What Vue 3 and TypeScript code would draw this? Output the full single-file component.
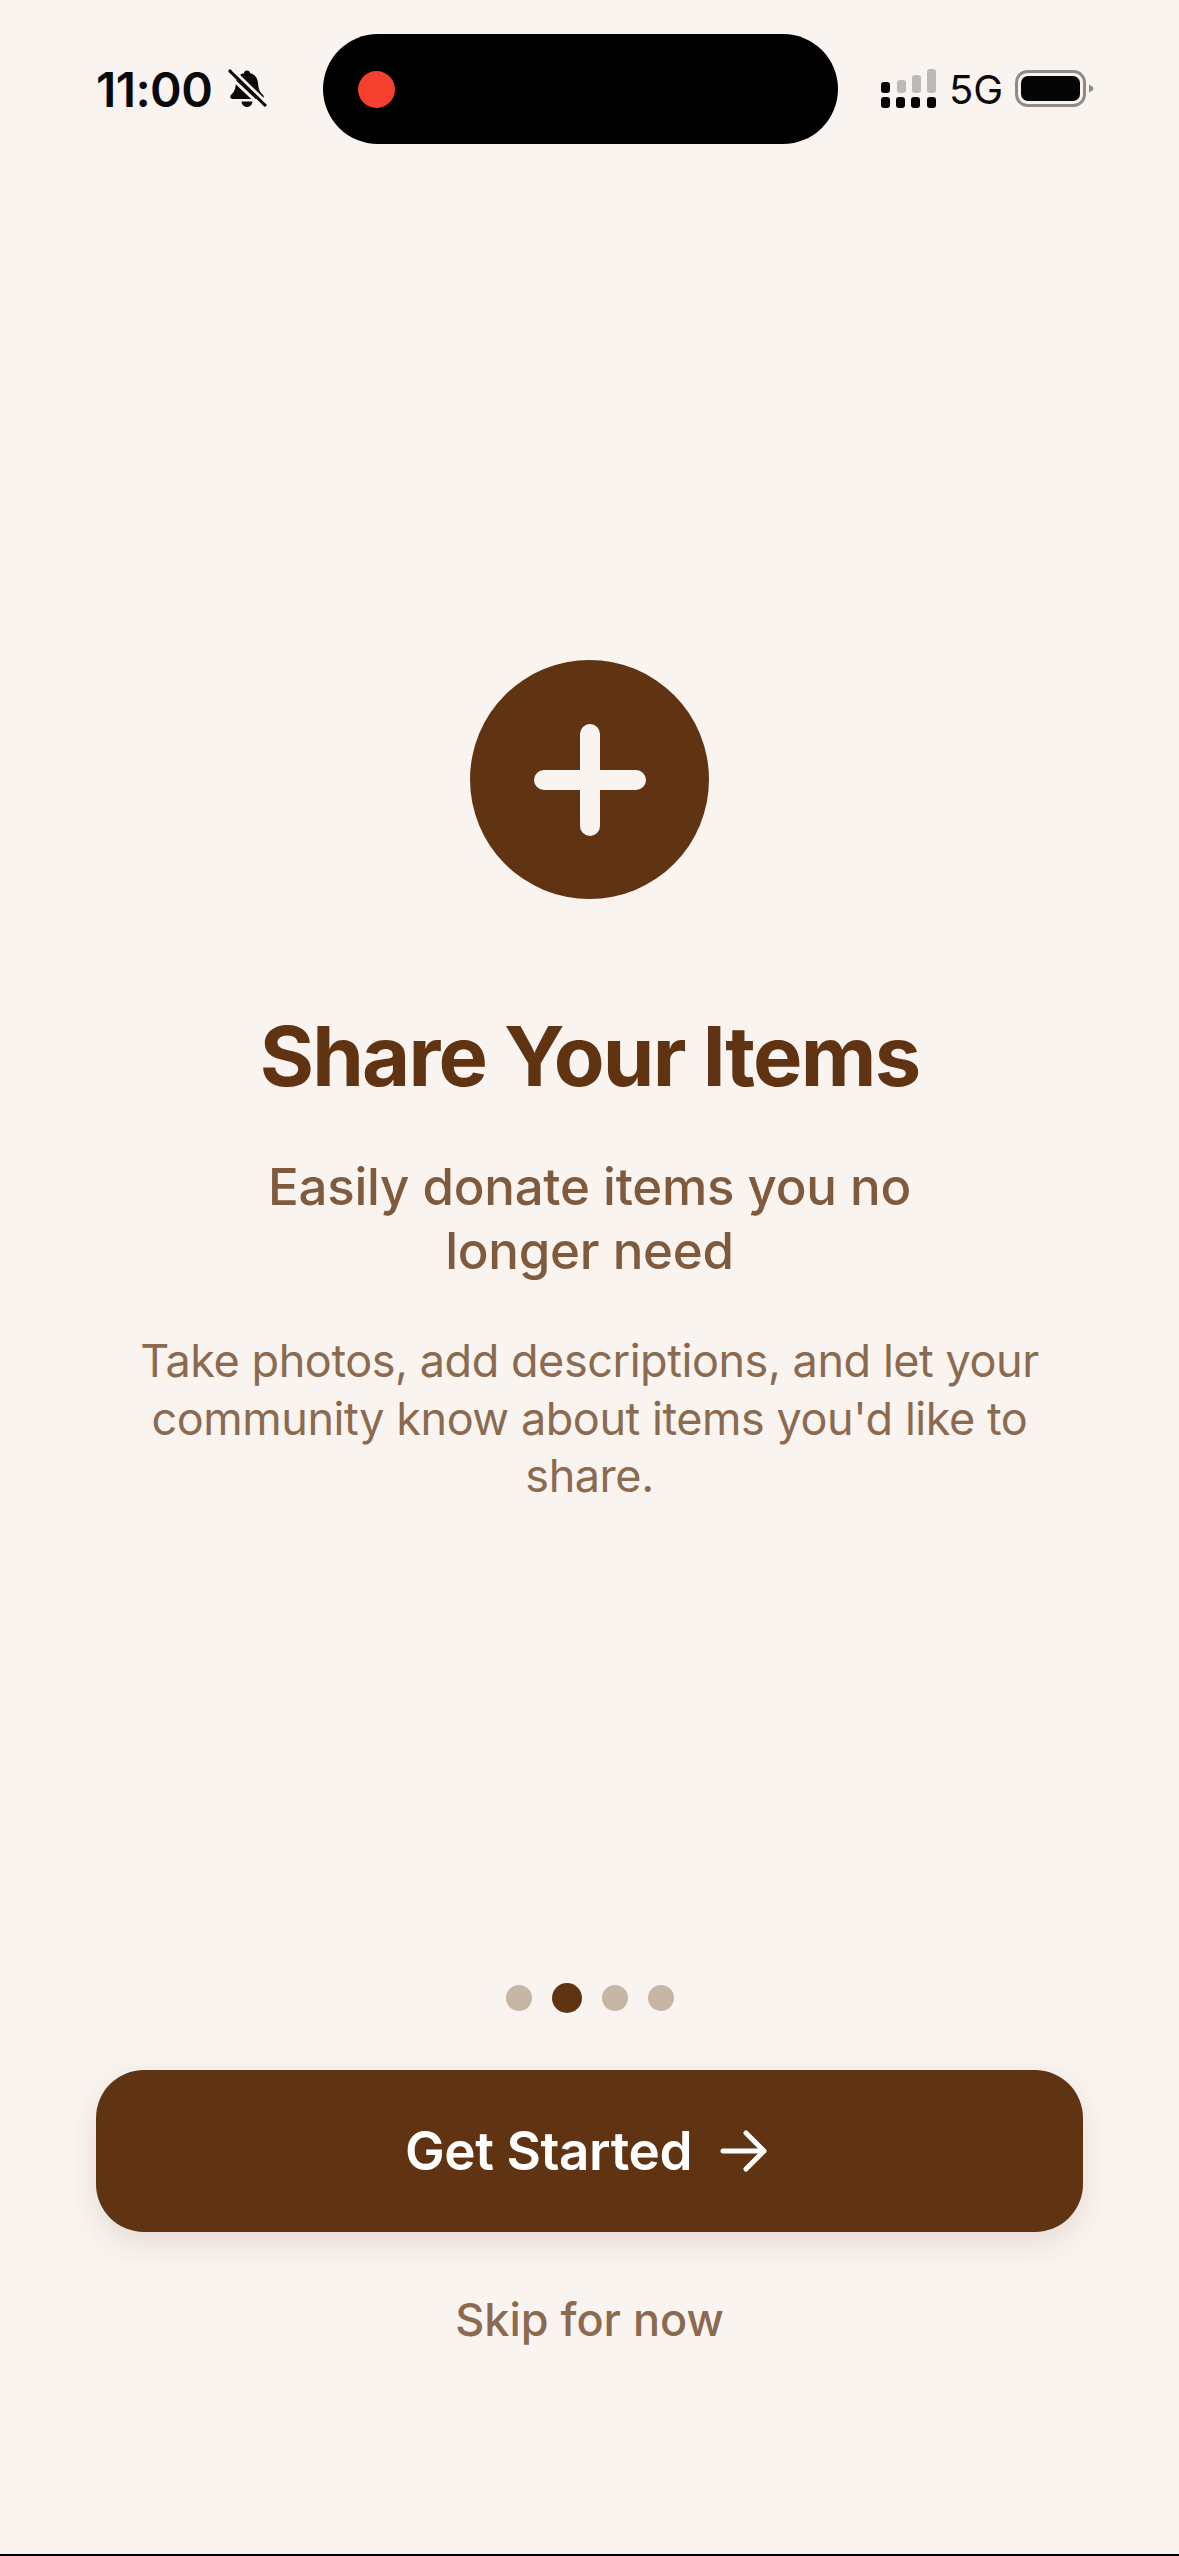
<script setup lang="ts">
const dots: number[] = [0, 1, 2, 3]
const active = 1
</script>

<template>
  <div class="screen">
    <header class="status">
      <div class="status-left">
        <span class="time">11:00</span>
        <svg class="bell" viewBox="0 0 40 40" width="40" height="40">
          <path d="M20 1.500c1.800 0 3 1.200 3.200 2.800 5.200 1.300 7.600 5.400 8 11 .3 4.400 1.300 7.600 4.800 10.700 1.600 1.500.6 4-1.700 4H5.700c-2.300 0-3.300-2.500-1.700-4 3.500-3.100 4.500-6.300 4.800-10.700.4-5.600 2.800-9.700 8-11 .2-1.600 1.400-2.800 3.200-2.800z" fill="#0a0a0a"/>
          <path d="M14.500 32.500h11c-.3 3.200-2.600 5.500-5.500 5.500s-5.200-2.300-5.500-5.500z" fill="#0a0a0a"/>
          <path d="M0 5l35 33" stroke="#f9f4f0" stroke-width="3"/>
          <path d="M3 2l35 34" stroke="#0a0a0a" stroke-width="3.200" stroke-linecap="round"/>
          <path d="M5.500 0.500l35 34" stroke="#f9f4f0" stroke-width="2.800"/>
        </svg>
      </div>
      <div class="island"><span class="rec"></span></div>
      <div class="status-right">
        <svg class="signal" viewBox="0 0 56 40" width="56" height="40">
          <g fill="#bdb9b6">
            <rect x="16" y="11" width="9" height="13" rx="3"/>
            <rect x="31" y="6" width="9" height="18" rx="3"/>
            <rect x="46" y="0" width="9" height="24" rx="3"/>
          </g>
          <g fill="#050505">
            <rect x="0" y="13" width="9" height="11" rx="3"/>
            <rect x="0" y="28" width="9" height="11" rx="3"/>
            <rect x="15" y="28" width="9" height="11" rx="3"/>
            <rect x="30" y="28" width="9" height="11" rx="3"/>
            <rect x="46" y="28" width="9" height="11" rx="3"/>
          </g>
        </svg>
        <span class="net">5G</span>
        <svg class="battery" viewBox="0 0 80 38" width="80" height="38">
          <rect x="1.500" y="1.500" width="68" height="34" rx="11" fill="none" stroke="#8f8b87" stroke-width="3"/>
          <rect x="6" y="6" width="59" height="25" rx="7" fill="#050505"/>
          <path d="M74 14.500l4 2.500q1 1.500 0 3l-4 2.500z" fill="#8f8b87"/>
        </svg>
      </div>
    </header>

    <main class="content">
      <div class="badge">
        <svg viewBox="0 0 112 112" width="112" height="112">
          <path d="M56 10v92M10 56h92" stroke="#f9f4f0" stroke-width="20" stroke-linecap="round" fill="none"/>
        </svg>
      </div>
      <h1 class="title">Share Your Items</h1>
      <h2 class="subtitle">Easily donate items you no<br />longer need</h2>
      <p class="body">Take photos, add descriptions, and let your community know about items you'd like to share.</p>
    </main>

    <footer class="footer">
      <div class="dots">
        <span v-for="d in dots" :key="d" class="dot" :class="{ on: d === active }"></span>
      </div>
      <button class="cta" type="button">
        <span>Get Started</span>
        <svg viewBox="0 0 48 48" width="48" height="48">
          <path d="M3 24h41M26 6l18 18-18 18" fill="none" stroke="#fff" stroke-width="5" stroke-linecap="round" stroke-linejoin="round"/>
        </svg>
      </button>
      <a class="skip">Skip for now</a>
    </footer>
    <div class="edge"></div>
  </div>
</template>

<style scoped>
.screen {
  width: 1179px;
  height: 2556px;
  background: #f9f4f0;
  display: flex;
  flex-direction: column;
  font-family: Inter, "Liberation Sans", sans-serif;
  overflow: hidden;
}
.status {
  height: 110px;
  margin-top: 34px;
  display: flex;
  align-items: center;
  padding: 0 64px 0 96px;
  flex: none;
}
.status-left {
  width: 227px;
  display: flex;
  align-items: center;
  gap: 15px;
}
.time {
  font-size: 48px;
  font-weight: 600;
  color: #0a0a0a;
  letter-spacing: -0.6px;
}
.island {
  width: 515px;
  height: 110px;
  background: #000;
  border-radius: 55px;
  display: flex;
  align-items: center;
  padding-left: 35px;
  box-sizing: border-box;
}
.rec {
  width: 37px;
  height: 37px;
  border-radius: 50%;
  background: #f5402f;
}
.status-right {
  margin-left: 43px;
  display: flex;
  align-items: center;
  gap: 12px;
}
.net {
  font-size: 40px;
  font-weight: 400;
  color: #0a0a0a;
}
.content {
  flex: 1;
  display: flex;
  flex-direction: column;
  align-items: center;
  padding-top: 516px;
  text-align: center;
}
.badge {
  width: 239px;
  height: 239px;
  border-radius: 50%;
  background: #603412;
  display: flex;
  align-items: center;
  justify-content: center;
}
.title {
  margin: 112px 0 0;
  font-size: 83px;
  line-height: 90px;
  font-weight: 700;
  color: #603412;
  letter-spacing: -1.800px;
}
.subtitle {
  margin: 54px 0 0;
  font-size: 51px;
  line-height: 64px;
  font-weight: 500;
  color: #7f5a3c;
  letter-spacing: -0.250px;
}
.body {
  margin: 49px 0 0;
  width: 960px;
  font-size: 45px;
  line-height: 57.500px;
  font-weight: 400;
  color: #8b6a50;
  letter-spacing: -0.450px;
}
.footer {
  flex: none;
  display: flex;
  flex-direction: column;
  align-items: center;
  padding: 0 96px 206px;
}
.dots {
  display: flex;
  align-items: center;
  gap: 20px;
  height: 30px;
}
.dot {
  width: 26px;
  height: 26px;
  border-radius: 50%;
  background: #c8b6a5;
}
.dot.on {
  width: 30px;
  height: 30px;
  background: #603412;
}
.cta {
  margin-top: 57px;
  width: 100%;
  height: 162px;
  border: none;
  border-radius: 48px;
  padding: 0 6px 0 0;
  background: #603412;
  box-shadow: 0 12px 30px rgba(96, 52, 18, 0.12);
  color: #fff;
  font: 600 53px Inter, "Liberation Sans", sans-serif;
  letter-spacing: -0.400px;
  display: flex;
  align-items: center;
  justify-content: center;
  gap: 28px;
}
.skip {
  margin-top: 60px;
  font-size: 45px;
  line-height: 56px;
  font-weight: 500;
  color: #8b6a50;
}
.edge {
  flex: none;
  height: 2px;
  background: #000;
}
</style>
<style>
html, body { margin: 0; background: #f9f4f0; }
</style>
